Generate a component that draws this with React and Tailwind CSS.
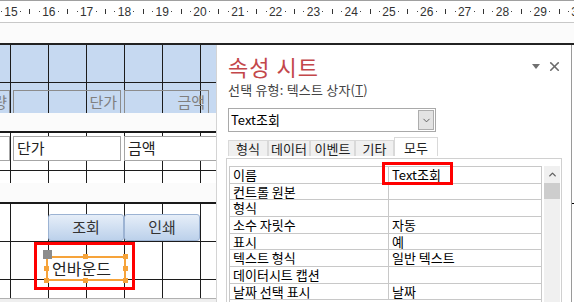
import React from "react";
import { ChevronDown, ChevronUp, X } from "lucide-react";

const grid =
  "bg-[linear-gradient(to_right,#1c1c1c_1px,transparent_1px),linear-gradient(to_bottom,#1c1c1c_1px,transparent_1px)] bg-[length:38px_38px] bg-[position:10px_37px]";

const props = [
  ["이름", "Text조회"],
  ["컨트롤 원본", ""],
  ["형식", ""],
  ["소수 자릿수", "자동"],
  ["표시", "예"],
  ["텍스트 형식", "일반 텍스트"],
  ["데이터시트 캡션", ""],
  ["날짜 선택 표시", "날짜"],
];

function Ruler() {
  const nums = [];
  for (let n = 14; n <= 30; n++) nums.push(n);
  return (
    <div className="h-[23px] border-t border-[#a0a0a0] border-b border-b-[#c8c8c8] bg-white flex items-center overflow-hidden">
      <div className="flex ml-[-31.5px] shrink-0">
        {nums.map((n) => (
          <div key={n} className="w-[37.8px] shrink-0 flex items-center h-[14px]">
            <div className="w-[9.45px] flex justify-center text-[12px] leading-none text-[#333] font-['Liberation_Sans',sans-serif]">
              {n}
            </div>
            <div className="w-[9.45px] flex justify-center">
              <span className="w-px h-px bg-[#444]" />
            </div>
            <div className="w-[9.45px] flex justify-center">
              <span className="w-px h-[5px] bg-[#333]" />
            </div>
            <div className="w-[9.45px] flex justify-center">
              <span className="w-px h-px bg-[#444]" />
            </div>
          </div>
        ))}
      </div>
    </div>
  );
}

function Handle({ className }) {
  return <span className={"absolute w-[5px] h-[5px] bg-[#f6a33a] " + className} />;
}

function FormDesign() {
  return (
    <div className="w-[216px] shrink-0 flex flex-col overflow-hidden">
      {/* header */}
      <div className={"relative h-[68px] bg-[#c6d9f1] overflow-hidden " + grid}>
        <div className="absolute left-[-60px] top-[45px] w-[70px] h-[30px] border border-[#8c8c8c] text-right pr-[2px] text-[15px] leading-[22px] text-[#7f7f7f]">
          수량
        </div>
        <div className="absolute left-[13px] top-[45px] w-[108px] h-[30px] border border-[#8c8c8c] text-right pr-[3px] text-[15px] leading-[22px] text-[#7f7f7f]">
          단가
        </div>
        <div className="absolute left-[124px] top-[45px] w-[85px] h-[30px] border border-[#8c8c8c] text-right pr-[3px] text-[15px] leading-[22px] text-[#7f7f7f]">
          금액
        </div>
      </div>
      <div className="h-[18px] bg-[#fbfbfb]" />
      <div className="h-[2px] bg-[#1a1a1a]" />

      {/* detail */}
      <div className={"relative h-[50px] bg-white overflow-hidden " + grid}>
        <div className="absolute left-[-60px] top-[3px] w-[70px] h-[25px] border border-[#a6a6a6] bg-white" />
        <div className="absolute left-[13px] top-[3px] w-[108px] h-[25px] border border-[#a6a6a6] bg-white pl-[3px] text-[15px] leading-[22px] text-[#222]">
          단가
        </div>
        <div className="absolute left-[124px] top-[3px] w-[110px] h-[25px] border border-[#a6a6a6] bg-white pl-[3px] text-[15px] leading-[22px] text-[#222]">
          금액
        </div>
      </div>
      <div className="h-[19px] bg-[#fbfbfb]" />
      <div className="h-[2px] bg-[#1a1a1a]" />

      {/* footer */}
      <div className={"relative flex-1 bg-white " + grid}>
        <div className="absolute left-[48px] top-[10px] flex">
          <button className="w-[76px] h-[27px] rounded-[3px] border border-[#9cb3d3] bg-gradient-to-b from-[#e6eef8] to-[#bcd1eb] text-[15px] text-[#333]">
            조회
          </button>
          <button className="w-[76px] h-[27px] rounded-[3px] border border-[#9cb3d3] bg-gradient-to-b from-[#e6eef8] to-[#bcd1eb] text-[15px] text-[#333]">
            인쇄
          </button>
        </div>
        <div className="absolute left-[46px] top-[52px] w-[80px] h-[25px] border-2 border-[#f6a33a] bg-white pl-[4px] text-[16px] leading-[20px] text-[#222]">
          언바운드
        </div>
        <Handle className="left-[83px] top-[50px]" />
        <Handle className="left-[123px] top-[50px]" />
        <Handle className="left-[44px] top-[62px]" />
        <Handle className="left-[123px] top-[62px]" />
        <Handle className="left-[44px] top-[74px]" />
        <Handle className="left-[83px] top-[74px]" />
        <Handle className="left-[123px] top-[74px]" />
        <span className="absolute left-[43px] top-[46px] w-[9px] h-[9px] bg-[#8c8c8c]" />
        <div className="absolute left-[34px] top-[38px] w-[101px] h-[48px] border-[3px] border-[#ff0000]" />
      </div>
      <div className="h-[4px] border-t border-[#b0b0b0] bg-[#efefef]" />
    </div>
  );
}

function PropertySheet() {
  const tabs = ["형식", "데이터", "이벤트", "기타"];
  const tabW = ["w-[40px]", "w-[42px]", "w-[45px]", "w-[39px]"];
  return (
    <div className="relative w-[356px] shrink-0 bg-white border-l border-[#d4d4d4] border-r border-r-[#9a9a9a] pl-[11px] flex flex-col">
      <div className="flex items-center justify-between mt-[8px] h-[26px]">
        <span className="text-[22px] leading-[26px] text-[#c3474a] tracking-[1px]">속성 시트</span>
        <div className="flex items-center gap-[7px] pr-[9px]">
          <span className="w-0 h-0 border-l-[4px] border-r-[4px] border-t-[5px] border-l-transparent border-r-transparent border-t-[#707070]" />
          <X size={15} strokeWidth={2.6} color="#6a6a6a" />
        </div>
      </div>
      <div className="mt-[3px] h-[16px] text-[13px] leading-[16px] tracking-[0.2px] text-[#444]">
        선택 유형: 텍스트 상자(<span className="underline">T</span>)
      </div>
      <div className="mt-[10px] w-[208px] h-[24px] border border-[#a9a9a9] flex items-center justify-between pl-[2px] pr-px">
        <span className="text-[13px] text-black">Text조회</span>
        <span className="w-[16px] h-[20px] bg-[#e3e3e3] border border-[#adadad] flex items-center justify-center">
          <ChevronDown size={11} strokeWidth={2} color="#555" />
        </span>
      </div>
      <div className="mt-[5px] h-[19px] flex items-end">
        {tabs.map((t, i) => (
          <div
            key={t}
            className={
              tabW[i] +
              " h-[16px] bg-[#f0f0f0] border border-b-0 border-[#d9d9d9] flex items-center justify-center text-[13px] leading-none text-[#222]"
            }
          >
            {t}
          </div>
        ))}
        <div className="w-[44px] h-[19px] bg-white border border-b-0 border-[#d9d9d9] flex items-center justify-center text-[13px] leading-none text-[#222]">
          모두
        </div>
      </div>
      <div className="ml-[-2px] mt-[2px] w-[336px] flex-1 border border-b-0 border-[#d0d0d0] pt-[7px] pl-[2px] flex gap-[2px]">
        <div className="w-[313px] border-t border-l border-r border-[#c8c8c8]">
          {props.map(([k, v]) => (
            <div key={k} className="h-[16.67px] flex border-b border-[#c8c8c8] text-[13px] leading-[15px] text-black overflow-hidden">
              <div className="w-[159px] shrink-0 border-r border-[#c8c8c8] pl-[3px] overflow-hidden">{k}</div>
              <div className="flex-1 pl-[3px] overflow-hidden">{v}</div>
            </div>
          ))}
        </div>
        <div className="w-[16px] bg-[#f0f0f0] flex flex-col">
          <div className="h-[17px] flex items-center justify-center">
            <ChevronUp size={11} strokeWidth={3} color="#606060" />
          </div>
          <div className="h-[16px] bg-[#cdcdcd]" />
        </div>
      </div>
      <div className="absolute left-[165px] top-[117px] w-[71px] h-[23px] border-[3px] border-[#ff0000]" />
    </div>
  );
}

export default function App() {
  return (
    <div className="w-[574px] h-[302px] overflow-hidden bg-white flex flex-col font-['Noto_Sans_CJK_KR',sans-serif]">
      <Ruler />
      <div className="h-[20px] bg-[#fbfbfb]" />
      <div className="h-[2px] bg-[#222]" />
      <div className="flex flex-1 min-h-0">
        <FormDesign />
        <PropertySheet />
        <div className="w-[2px] bg-white pt-[158px]">
          <div className="h-px bg-black" />
        </div>
      </div>
    </div>
  );
}
